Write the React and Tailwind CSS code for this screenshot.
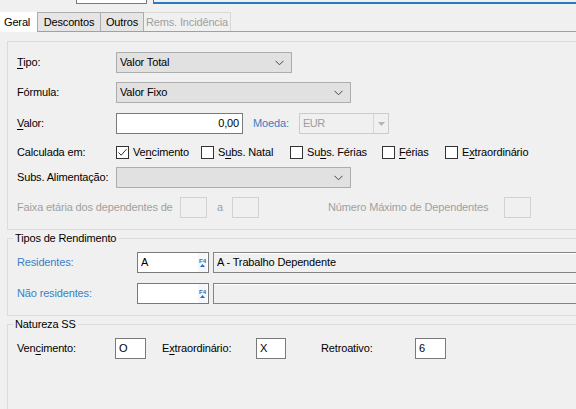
import { useState } from 'react';

const azul = 'text-[#3a7fc6]';

function U({ children }) {
  return <span className="underline underline-offset-[2px] decoration-[1px]">{children}</span>;
}

function Chevron() {
  return (
    <svg width="9" height="6" viewBox="0 0 9 6" className="shrink-0">
      <path d="M0.5 0.8 L4.5 4.8 L8.5 0.8" fill="none" stroke="#444" strokeWidth="1" />
    </svg>
  );
}

function Combo({ width, texto }) {
  return (
    <div className={`h-[21px] ${width} bg-[#e1e1e1] border border-[#adadad] flex items-center pl-[3px] pr-[7px]`}>
      <span className="flex-1 truncate">{texto}</span>
      <Chevron />
    </div>
  );
}

function Check({ marcado, children, className = '' }) {
  const [on, setOn] = useState(marcado);
  return (
    <label className={`flex items-center gap-[4px] cursor-default ${className}`} onClick={() => setOn(!on)}>
      <span className="w-[13px] h-[13px] border border-[#333] bg-white flex items-center justify-center shrink-0">
        {on && (
          <svg width="11" height="11" viewBox="0 0 11 11">
            <path d="M1.5 5.5 L4.2 8.2 L9.5 2.2" fill="none" stroke="#333" strokeWidth="1" />
          </svg>
        )}
      </span>
      <span>{children}</span>
    </label>
  );
}

function CaixaCinza({ width }) {
  return <div className={`h-[21px] ${width} border border-[#d2d2d2] bg-[#f0f0f0] shrink-0`} />;
}

function CampoF4({ valor }) {
  return (
    <div className="h-[21px] w-[72px] bg-white border border-[#7a7a7a] flex items-center pl-[3px] shrink-0">
      <span className="flex-1">{valor}</span>
      <span className="w-[9px] h-[19px] flex flex-col items-center justify-center mr-[1px] bg-[#f4f7fb]">
        <span className="text-[6px] leading-[6px] font-bold tracking-normal text-[#2b6cb5]">F4</span>
        <svg width="5" height="3" viewBox="0 0 5 3">
          <path d="M0 3 L2.5 0 L5 3 Z" fill="#2b6cb5" />
        </svg>
      </span>
    </div>
  );
}

function CaixaTexto({ width, valor }) {
  return (
    <div className={`h-[21px] ${width} bg-white border border-[#7a7a7a] flex items-center pl-[3px] shrink-0`}>
      {valor}
    </div>
  );
}

function Grupo({ titulo, className = '', children }) {
  return (
    <div className={`relative ml-[7px] border border-r-0 border-[#dcdcdc] pl-[9px] ${className}`}>
      {titulo && (
        <span className="absolute left-[5px] top-[-9px] px-[2px] bg-[#f0f0f0] leading-[16px]">{titulo}</span>
      )}
      {children}
    </div>
  );
}

export default function App() {
  return (
    <div
      className="w-[576px] h-[409px] overflow-hidden bg-[#f0f0f0] text-[11px] tracking-[-0.15px] text-black whitespace-nowrap"
      style={{ fontFamily: '"Liberation Sans", Arial, sans-serif' }}
    >
      {/* topo */}
      <div className="flex h-[12px]">
        <div className="ml-[76px] w-[71px] h-[4px] border border-t-0 border-[#7a7a7a] bg-white" />
        <div className="ml-[6px] flex-1 h-[4px] border-l border-b-2 border-[#2b79c2]" />
      </div>

      {/* abas */}
      <div className="flex h-[20px] items-stretch">
        <div className="w-[37px] bg-white pl-[4px] flex items-center">Geral</div>
        <div className="flex flex-1 border-b border-[#a0a0a0]">
          <div className="w-[64px] bg-[#e5e5e5] border border-b-0 border-[#acacac] flex items-center justify-center">Descontos</div>
          <div className="w-[43px] bg-[#e5e5e5] border border-l-0 border-b-0 border-[#acacac] flex items-center justify-center">Outros</div>
          <div className="w-[87px] border border-l-0 border-b-0 border-[#d9d9d9] text-[#a0a0a0] flex items-center justify-center">Rems. Incidência</div>
        </div>
      </div>

      {/* grupo principal */}
      <Grupo className="mt-[9px] h-[189px] pt-[10px]">
        <div className="flex items-center h-[21px]">
          <span className="w-[99px]"><U>T</U>ipo:</span>
          <Combo width="w-[176px]" texto="Valor Total" />
        </div>
        <div className="flex items-center h-[21px] mt-[9px]">
          <span className="w-[99px]">Fórmula:</span>
          <Combo width="w-[235px]" texto="Valor Fixo" />
        </div>
        <div className="flex items-center h-[21px] mt-[10px]">
          <span className="w-[99px]"><U>V</U>alor:</span>
          <div className="h-[21px] w-[127px] bg-white border border-[#7a7a7a] flex items-center justify-end pr-[3px]">0,00</div>
          <span className={`ml-[10px] w-[46px] ${azul}`}>Moeda:</span>
          <div className="h-[21px] w-[90px] border border-[#cccccc] bg-[#f0f0f0] flex items-center text-[#9d9d9d]">
            <span className="flex-1 pl-[3px] tracking-[-0.5px]">EUR</span>
            <span className="w-[15px] h-full border-l border-[#d6d6d6] flex items-center justify-center">
              <svg width="7" height="4" viewBox="0 0 7 4">
                <path d="M0 0 L7 0 L3.5 4 Z" fill="#b5b5b5" />
              </svg>
            </span>
          </div>
        </div>
        <div className="flex items-center h-[13px] mt-[12px]">
          <span className="w-[99px]">Calculada em:</span>
          <Check marcado className="w-[85px]">Ve<U>n</U>cimento</Check>
          <Check className="w-[89px]">S<U>u</U>bs. Natal</Check>
          <Check className="w-[92px]">Su<U>b</U>s. Férias</Check>
          <Check className="w-[63px]"><U>F</U>érias</Check>
          <Check>E<U>x</U>traordinário</Check>
        </div>
        <div className="flex items-center h-[21px] mt-[8px]">
          <span className="w-[99px]">Subs. Alimentação:</span>
          <Combo width="w-[235px]" texto="" />
        </div>
        <div className="flex items-center h-[21px] mt-[9px] text-[#a0a0a0]">
          <span className="w-[163px]">Faixa etária dos dependentes de</span>
          <CaixaCinza width="w-[27px]" />
          <span className="ml-[10px] w-[15px]">a</span>
          <CaixaCinza width="w-[27px]" />
          <span className="ml-[69px] w-[176px]">Número Máximo de Dependentes</span>
          <CaixaCinza width="w-[27px]" />
        </div>
      </Grupo>

      {/* tipos de rendimento */}
      <Grupo titulo="Tipos de Rendimento" className="mt-[8px] h-[78px] pt-[13px]">
        <div className="flex items-center h-[21px]">
          <span className={`w-[120px] ${azul}`}>Residentes:</span>
          <CampoF4 valor="A" />
          <div className="ml-[4px] flex-1 h-[21px] border border-r-0 border-[#838383] bg-[#f0f0f0] flex items-center pl-[3px] shadow-[inset_0_1px_0_#ffffff]">
            A - Trabalho Dependente
          </div>
        </div>
        <div className="flex items-center h-[21px] mt-[10px]">
          <span className={`w-[120px] ${azul}`}>Não residentes:</span>
          <CampoF4 valor="" />
          <div className="ml-[4px] flex-1 h-[21px] border border-r-0 border-[#838383] bg-[#f0f0f0] shadow-[inset_0_1px_0_#ffffff]" />
        </div>
      </Grupo>

      {/* natureza ss */}
      <Grupo titulo="Natureza SS" className="mt-[8px] h-[120px] pt-[13px]">
        <div className="flex items-center h-[21px]">
          <span className="w-[98px]">Ven<U>c</U>imento:</span>
          <CaixaTexto width="w-[31px]" valor="O" />
          <span className="ml-[16px] w-[94px]">E<U>x</U>traordinário:</span>
          <CaixaTexto width="w-[30px]" valor="X" />
          <span className="ml-[35px] w-[94px]">Retroativo:</span>
          <CaixaTexto width="w-[31px]" valor="6" />
        </div>
      </Grupo>
    </div>
  );
}
